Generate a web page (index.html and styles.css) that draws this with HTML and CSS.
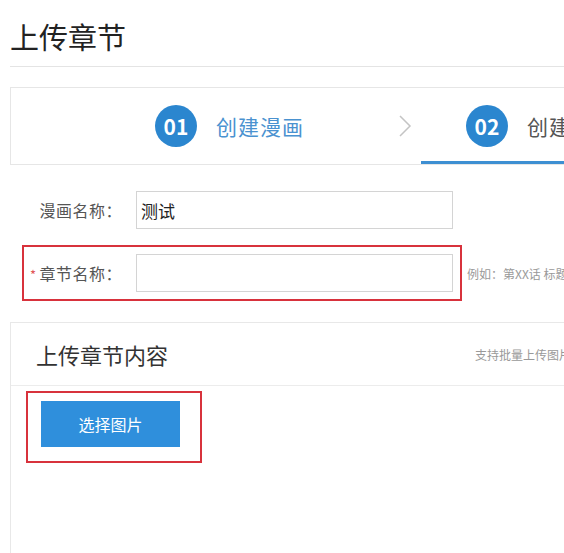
FILE: index.html
```html
<!DOCTYPE html>
<html lang="zh-CN">
<head>
    <meta charset="UTF-8">
    <title>上传章节</title>
    <link rel="stylesheet" href="styles.css">
</head>
<body>
    <div class="page">
        <h1 class="page-title">上传章节</h1>

        <div class="steps">
            <div class="step step-done">
                <span class="step-num">01</span>
                <span class="step-text">创建漫画</span>
            </div>
            <div class="step-arrow">
                <svg width="14" height="24" viewBox="0 0 14 24"><polyline points="2,2 12,12 2,22" fill="none" stroke="#c4c4c4" stroke-width="1.5"/></svg>
            </div>
            <div class="step step-current">
                <span class="step-num">02</span>
                <span class="step-text">创建章节</span>
            </div>
        </div>

        <div class="form">
            <div class="field">
                <label class="field-label">漫画名称：</label>
                <input class="field-input" type="text" value="测试">
            </div>
            <div class="field field-marked">
                <label class="field-label"><span class="req">*</span>章节名称：</label>
                <input class="field-input" type="text">
                <span class="field-hint">例如：第XX话 标题</span>
            </div>
        </div>

        <div class="card">
            <div class="card-header">
                <span class="card-title">上传章节内容</span>
                <span class="card-tip">支持批量上传图片</span>
            </div>
            <div class="card-body">
                <div class="upload-mark">
                    <button class="upload-btn">选择图片</button>
                </div>
            </div>
        </div>
    </div>
</body>
</html>
```

FILE: styles.css
```css
html, body {
    margin: 0;
    overflow: hidden;
}
body {
    font-family: "Noto Sans CJK SC", "Noto Sans", sans-serif;
    background: #fff;
    color: #333;
}
.page {
    padding-left: 10px;
    width: 900px;
}
.page-title {
    margin: 0;
    padding-top: 16px;
    height: 50px;
    font-size: 29px;
    font-weight: normal;
    line-height: 40px;
    color: #222;
    border-bottom: 1px solid #e4e4e4;
}
.steps {
    margin-top: 20px;
    height: 76px;
    border: 1px solid #e6e6e6;
    display: flex;
    align-items: center;
}
.step {
    display: flex;
    align-items: center;
    gap: 19px;
    height: 100%;
    box-sizing: border-box;
}
.step-done {
    margin-left: 144px;
}
.step-current {
    padding-left: 45px;
    border-bottom: 3px solid #3d8fd2;
    padding-top: 3px;
}
.step-num {
    width: 42px;
    height: 42px;
    border-radius: 50%;
    background: #2b86cf;
    color: #fff;
    font-size: 21px;
    font-weight: bold;
    display: flex;
    align-items: center;
    justify-content: center;
}
.step-text {
    font-size: 21px;
    letter-spacing: 1px;
}
.step-done .step-text {
    color: #4a92d0;
}
.step-current .step-text {
    color: #555;
}
.step-arrow {
    margin-left: 94px;
    margin-right: 9px;
    display: flex;
    align-items: center;
}
.form {
    margin-top: 17px;
    padding-left: 12px;
    display: flex;
    flex-direction: column;
    gap: 7px;
}
.field {
    width: 436px;
    border: 2px solid transparent;
    padding: 7px 0;
    display: flex;
    align-items: center;
    position: relative;
}
.field-marked {
    border-color: #d8323c;
}
.field-label {
    width: 98px;
    padding-right: 14px;
    text-align: right;
    font-size: 16px;
    letter-spacing: 0.5px;
    color: #555;
}
.req {
    color: #e05555;
    margin-right: 3px;
    font-size: 13px;
}
.field-input {
    width: 317px;
    height: 38px;
    box-sizing: border-box;
    border: 1px solid #d4d4d4;
    padding: 0 4px;
    font-family: inherit;
    font-size: 17px;
    color: #222;
    outline: none;
}
.field-hint {
    position: absolute;
    left: 443px;
    white-space: nowrap;
    font-size: 12px;
    color: #999;
}
.card {
    margin-top: 21px;
    border-top: 1px solid #e8e8e8;
    border-left: 1px solid #e8e8e8;
    height: 240px;
}
.card-header {
    height: 62px;
    border-bottom: 1px solid #ececec;
    display: flex;
    align-items: center;
    padding-left: 25px;
}
.card-title {
    font-size: 22px;
    color: #333;
    width: 439px;
}
.card-tip {
    font-size: 12px;
    color: #999;
}
.card-body {
    padding: 5px 0 0 15px;
}
.upload-mark {
    width: 176px;
    border: 2px solid #d8323c;
    padding: 8px 0 14px 13px;
    box-sizing: border-box;
}
.upload-btn {
    width: 139px;
    height: 46px;
    border: none;
    background: #2f8fdc;
    color: #fff;
    font-family: inherit;
    font-size: 16px;
    cursor: pointer;
}
```
